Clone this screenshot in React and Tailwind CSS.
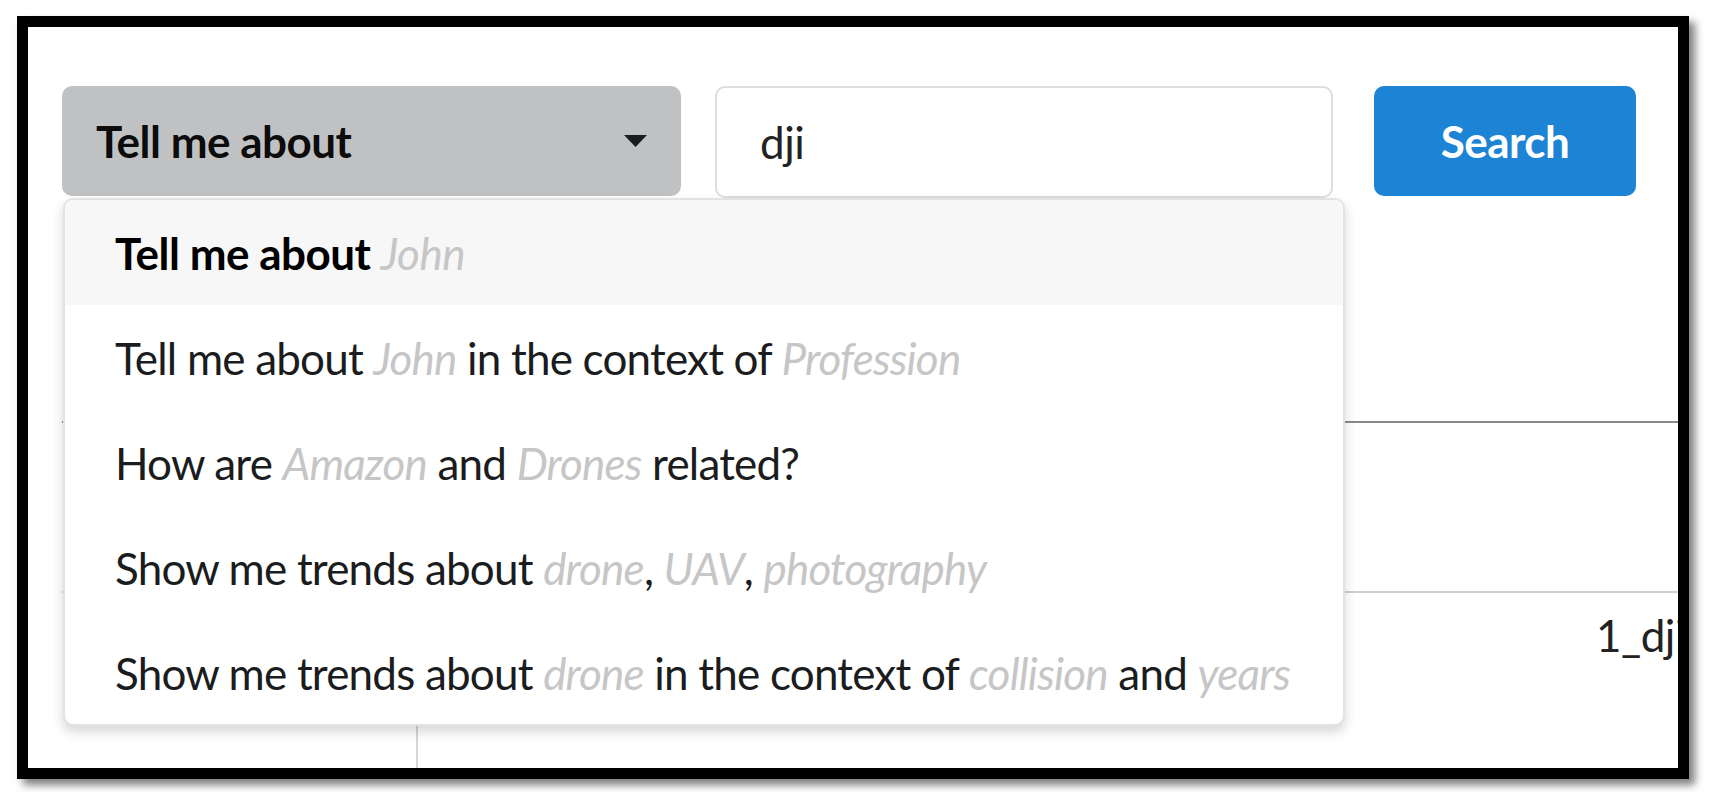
import React from 'react'

const suggestions = [
  [['Tell me about ', 0], ['John', 1]],
  [['Tell me about ', 0], ['John', 1], [' in the context of ', 0], ['Profession', 1]],
  [['How are ', 0], ['Amazon', 1], [' and ', 0], ['Drones', 1], [' related?', 0]],
  [['Show me trends about ', 0], ['drone', 1], [', ', 0], ['UAV', 1], [', ', 0], ['photography', 1]],
  [['Show me trends about ', 0], ['drone', 1], [' in the context of ', 0], ['collision', 1], [' and ', 0], ['years', 1]]
]

const Caret = () => (
  <svg width="23" height="12" viewBox="0 0 23 12" className="shrink-0">
    <polygon points="0,0 23,0 11.5,12" fill="#1b1c1d" />
  </svg>
)

const App = () => {
  return (
    <div
      className="w-[1710px] h-[792px] bg-white pl-[17px] pt-[16px] overflow-hidden"
      style={{ fontFamily: 'Lato, "Open Sans", sans-serif' }}
    >
      <div className="relative w-[1672px] h-[763px] border-[11px] border-black bg-white overflow-hidden shadow-[6px_6px_8px_rgba(0,0,0,0.5)]">
        <div className="pl-[34px] pt-[59px] text-[44px] tracking-[-0.5px] text-[#1b1c1d]">
          <div className="flex">
            <div className="relative">
              <div className="w-[619px] h-[110px] rounded-[10px] bg-[#c0c1c2] flex items-center justify-between pl-[34px] pr-[34px] font-bold text-black/95">
                <span>Tell me about</span>
                <Caret />
              </div>

              <div className="absolute left-[1px] top-[112px] z-10 w-[1282px] h-[528px] bg-white border-2 border-[#e2e2e3] rounded-[10px] overflow-hidden shadow-[0_6px_12px_rgba(34,36,38,0.18)]">
                {suggestions.map((parts, i) => (
                  <div
                    key={i}
                    className={
                      'h-[105px] flex items-center pl-[50px] whitespace-nowrap ' +
                      (i === 0 ? 'bg-[#f7f7f7] font-bold text-black' : 'text-[#1b1c1d] tracking-[-0.8px]')
                    }
                  >
                    {parts.map(([t, ph], j) =>
                      ph ? (
                        <span key={j} className="italic font-normal text-[#c6c6c6]">{t}</span>
                      ) : (
                        <span key={j} className="whitespace-pre">{t}</span>
                      )
                    )}
                  </div>
                ))}
              </div>
            </div>

            <div className="ml-[34px] w-[618px] h-[112px] rounded-[10px] border-2 border-[#dedede] bg-white flex items-center pl-[43px] text-[#222]">
              dji
            </div>

            <button className="ml-[41px] w-[262px] h-[110px] rounded-[10px] bg-[#1d83d4] text-white font-bold flex items-center justify-center">
              Search
            </button>
          </div>

          <div className="mt-[223px] w-[1700px] border-t-2 border-[#8a8a8a]">
            <div className="h-[168px]" />
            <div className="flex border-t-2 border-[#cfcfcf] h-[200px]">
              <div className="w-[356px] border-r-2 border-[#d6d6d6]" />
              <div className="pl-[1178px] pt-[9px] text-[#222] whitespace-nowrap">1_dji</div>
            </div>
          </div>
        </div>
      </div>
    </div>
  )
}

export default App
